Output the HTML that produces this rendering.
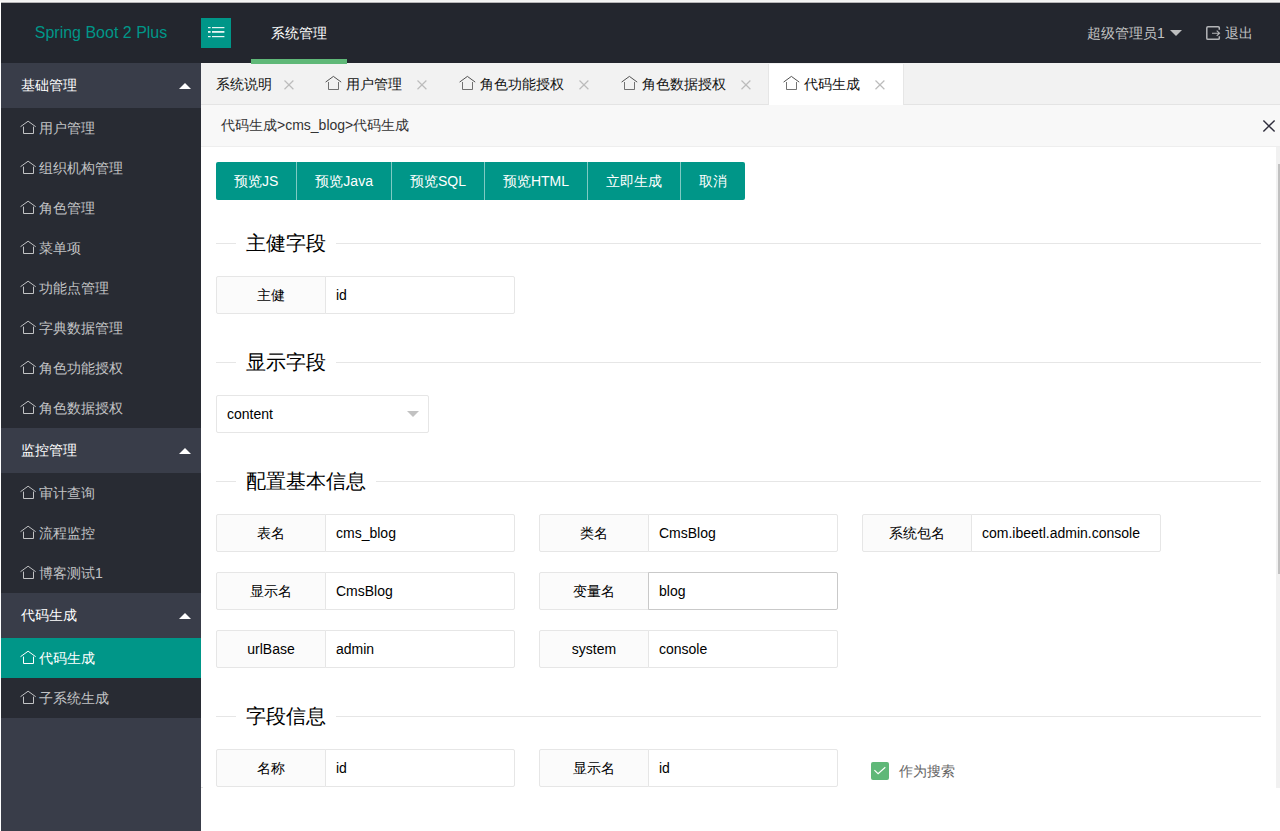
<!DOCTYPE html>
<html lang="zh">
<head>
<meta charset="utf-8">
<title>Spring Boot 2 Plus</title>
<style>
*{box-sizing:border-box;margin:0;padding:0}
html,body{width:1280px;height:831px;overflow:hidden;background:#fff}
body{font-family:"Liberation Sans",sans-serif;font-size:14px;color:#000;position:relative}
.abs{position:absolute}
#topstrip{left:0;top:0;width:1280px;height:3px;background:linear-gradient(#f1f1f1 0,#f1f1f1 1px,#f5f5f5 1px,#f5f5f5 2px,#b6b5b7 2px,#b6b5b7 3px)}
#header{left:1px;top:3px;width:1279px;height:60px;background:#23262e;z-index:5}
#logo{left:0;top:0;width:200px;height:60px;line-height:60px;text-align:center;color:#009688;font-size:16px}
#toggle{left:200px;top:15px;width:30px;height:30px;background:#009688}
#nav1{left:250px;top:0;width:96px;height:60px;line-height:60px;text-align:center;color:#fff;font-size:14px}
#nav1bar{left:250px;top:56px;width:96px;height:5px;background:#5fb878}
.hr{color:#c1c2c3;font-size:14px;line-height:60px;height:60px;top:0;white-space:nowrap}
#side{left:1px;top:63px;width:200px;height:768px;background:#393d49}
.grp{position:relative;height:45px;line-height:45px;padding-left:20px;color:#fff;font-size:14px}
.grp:after{content:"";position:absolute;right:10px;top:14px;border:6px solid transparent;border-bottom-color:#fff}
.sub{background:#282b33}
.it{position:relative;height:40px;line-height:40px;padding-left:38px;color:#c2c3c5;font-size:14px;white-space:nowrap}
.it svg{position:absolute;left:19px;top:12px}
.it.on{background:#009688;color:#fff}
#tabs{left:201px;top:63px;width:1079px;height:42px;background:#f2f2f2;border-bottom:1px solid #e4e4e4}
.tab{position:absolute;top:0;height:41px;line-height:41px;font-size:14px;color:#111;white-space:nowrap}
.tab svg.h{position:absolute;top:12px;color:#505050}
.tab .x{position:absolute;top:17px}
.tab span{top:1px}
.tab.on{background:#fff;border-left:1px solid #e6e6e6;border-right:1px solid #e6e6e6;top:1px;height:41px}
#tbar{left:201px;top:105px;width:1079px;height:42px;background:#f8f8f8;border-bottom:1px solid #eee;line-height:41px;padding-left:20px;color:#333;font-size:14px}
#content{left:201px;top:147px;width:1075px;height:684px;background:#fff}
#track{left:1276px;top:147px;width:4px;height:641px;background:#f1f1f1}
#thumb{left:1278px;top:164px;width:2px;height:410px;background:#c1c1c1}
.btns{left:15px;top:15px;height:38px;border-radius:2px;overflow:hidden;white-space:nowrap;font-size:0}
.btn{display:inline-block;height:38px;line-height:38px;padding:0 18px;background:#009688;color:#fff;font-size:14px;border-left:1px solid #7fcac3}
.btn:first-child{border-left:none}
.fs{left:15px;width:1045px;height:1px;background:#e6e6e6}
.lg{position:absolute;left:20px;top:-15px;height:30px;line-height:30px;padding:0 10px;background:#fff;font-size:20px;font-weight:300;color:#000;white-space:nowrap}
.fi{height:38px;width:299px}
.fi .l{position:absolute;left:0;top:0;width:110px;height:38px;line-height:36px;text-align:center;border:1px solid #e6e6e6;background:#fbfbfb;border-radius:2px 0 0 2px;color:#000;white-space:nowrap}
.fi .i{position:absolute;left:109px;top:0;width:190px;height:38px;line-height:36px;padding-left:10px;border:1px solid #e6e6e6;background:#fff;border-radius:0 2px 2px 0;color:#000;white-space:nowrap}
.fi .i.hv{border-color:#c9c9c9}
</style>
</head>
<body>
<div id="topstrip" class="abs"></div>
<div class="abs" style="left:0;top:2px;width:1px;height:829px;background:#fff"></div>
<div class="abs" style="left:201px;top:787px;width:2px;height:1px;background:#e4e4e4;z-index:6"></div>

<div id="header" class="abs">
  <div id="logo" class="abs">Spring Boot 2 Plus</div>
  <div id="toggle" class="abs">
    <svg width="30" height="30" viewBox="0 0 30 30" style="position:absolute;left:0;top:0">
      <g fill="#e8f5f3">
        <rect x="7" y="9" width="2.6" height="1.2"/><rect x="11" y="9" width="12.4" height="1.2"/>
        <rect x="7" y="13" width="2.6" height="1.8"/><rect x="11" y="13" width="12.4" height="1.8"/>
        <rect x="7" y="18" width="2.6" height="1.2"/><rect x="11" y="18" width="12.4" height="1.2"/>
      </g>
    </svg>
  </div>
  <div id="nav1" class="abs">系统管理</div>
  <div id="nav1bar" class="abs"></div>
  <div class="abs hr" style="left:1086px">超级管理员1</div>
  <div class="abs" style="left:1169px;top:27px;border:6px solid transparent;border-top-color:#bdbebf;width:0;height:0"></div>
  <svg class="abs" style="left:1204px;top:22px" width="17" height="17" viewBox="0 0 17 17">
    <path d="M14.3 4.7V2.9a1.1 1.1 0 0 0-1.1-1.1H2.9a1.1 1.1 0 0 0-1.1 1.1v10.3a1.1 1.1 0 0 0 1.1 1.1h10.3a1.1 1.1 0 0 0 1.1-1.1v-1.9" fill="none" stroke="#b4b5b8" stroke-width="1.5"/>
    <path d="M7 8.2h7.2M11.7 5.6l2.8 2.6-2.8 2.6" fill="none" stroke="#b4b5b8" stroke-width="1.15"/>
  </svg>
  <div class="abs hr" style="left:1224px">退出</div>
</div>

<div id="side" class="abs">
  <div class="grp">基础管理</div>
  <div class="sub">
    <div class="it"><svg width="17" height="15" viewBox="0 0 17 15"><use href="#hs"/></svg>用户管理</div>
    <div class="it"><svg width="17" height="15" viewBox="0 0 17 15"><use href="#hs"/></svg>组织机构管理</div>
    <div class="it"><svg width="17" height="15" viewBox="0 0 17 15"><use href="#hs"/></svg>角色管理</div>
    <div class="it"><svg width="17" height="15" viewBox="0 0 17 15"><use href="#hs"/></svg>菜单项</div>
    <div class="it"><svg width="17" height="15" viewBox="0 0 17 15"><use href="#hs"/></svg>功能点管理</div>
    <div class="it"><svg width="17" height="15" viewBox="0 0 17 15"><use href="#hs"/></svg>字典数据管理</div>
    <div class="it"><svg width="17" height="15" viewBox="0 0 17 15"><use href="#hs"/></svg>角色功能授权</div>
    <div class="it"><svg width="17" height="15" viewBox="0 0 17 15"><use href="#hs"/></svg>角色数据授权</div>
  </div>
  <div class="grp">监控管理</div>
  <div class="sub">
    <div class="it"><svg width="17" height="15" viewBox="0 0 17 15"><use href="#hs"/></svg>审计查询</div>
    <div class="it"><svg width="17" height="15" viewBox="0 0 17 15"><use href="#hs"/></svg>流程监控</div>
    <div class="it"><svg width="17" height="15" viewBox="0 0 17 15"><use href="#hs"/></svg>博客测试1</div>
  </div>
  <div class="grp">代码生成</div>
  <div class="sub">
    <div class="it on"><svg width="17" height="15" viewBox="0 0 17 15"><use href="#hs"/></svg>代码生成</div>
    <div class="it"><svg width="17" height="15" viewBox="0 0 17 15"><use href="#hs"/></svg>子系统生成</div>
  </div>
</div>

<svg width="0" height="0" style="position:absolute">
  <defs>
    <g id="hm" fill="none" stroke="currentColor" stroke-width="1">
      <path d="M0.6 7.1 L8.4 1.4 L16.2 7.1"/>
      <path d="M3.5 7 V14.5 H13.5 V7" opacity=".8"/>
    </g>
    <g id="hs" fill="none" stroke="currentColor" stroke-width="1">
      <path d="M0.5 6.7 L8.1 1.2 L15.7 6.7"/>
      <path d="M3.5 6.6 V13.5 H13.5 V6.6"/>
    </g>
    <g id="xx" fill="none" stroke="#bcbcbc" stroke-width="1.2">
      <path d="M0.5 0.5 L9.4 9.2 M9.4 0.5 L0.5 9.2"/>
    </g>
  </defs>
</svg>

<div id="tabs" class="abs">
  <div class="tab" style="left:0;width:110px"><span class="abs" style="left:15px">系统说明</span><svg class="x" style="left:83px" width="10" height="10"><use href="#xx"/></svg></div>
  <div class="tab" style="left:110px;width:134px"><svg class="h" style="left:14px" width="17" height="16" viewBox="0 0 17 16"><use href="#hm"/></svg><span class="abs" style="left:35px">用户管理</span><svg class="x" style="left:106px" width="10" height="10"><use href="#xx"/></svg></div>
  <div class="tab" style="left:244px;width:162px"><svg class="h" style="left:14px" width="17" height="16" viewBox="0 0 17 16"><use href="#hm"/></svg><span class="abs" style="left:35px">角色功能授权</span><svg class="x" style="left:134px" width="10" height="10"><use href="#xx"/></svg></div>
  <div class="tab" style="left:406px;width:162px"><svg class="h" style="left:14px" width="17" height="16" viewBox="0 0 17 16"><use href="#hm"/></svg><span class="abs" style="left:35px">角色数据授权</span><svg class="x" style="left:134px" width="10" height="10"><use href="#xx"/></svg></div>
  <div class="tab on" style="left:567px;width:136px"><svg class="h" style="left:14px;top:11px" width="17" height="16" viewBox="0 0 17 16"><use href="#hm"/></svg><span class="abs" style="left:35px;top:0">代码生成</span><svg class="x" style="left:106px;top:16px" width="10" height="10"><use href="#xx"/></svg></div>
</div>

<div id="tbar" class="abs">代码生成&gt;cms_blog&gt;代码生成
  <svg class="abs" style="left:1061px;top:14px" width="14" height="14" viewBox="0 0 14 14"><path d="M1.4 1.4L12.6 12.6M12.6 1.4L1.4 12.6" stroke="#2e2d3c" stroke-width="1.4" fill="none"/></svg>
</div>

<div id="content" class="abs">
  <div class="btns abs"><span class="btn">预览JS</span><span class="btn">预览Java</span><span class="btn">预览SQL</span><span class="btn">预览HTML</span><span class="btn">立即生成</span><span class="btn">取消</span></div>

  <div class="fs abs" style="top:96px"><div class="lg">主健字段</div></div>
  <div class="fi abs" style="left:15px;top:129px"><div class="l">主健</div><div class="i">id</div></div>

  <div class="fs abs" style="top:215px"><div class="lg">显示字段</div></div>
  <div class="abs" style="left:15px;top:248px;width:213px;height:38px;line-height:36px;border:1px solid #e6e6e6;border-radius:2px;padding-left:10px">content
    <div class="abs" style="right:9px;top:15px;width:0;height:0;border:6px solid transparent;border-top-color:#c2c2c2"></div>
  </div>

  <div class="fs abs" style="top:334px"><div class="lg">配置基本信息</div></div>
  <div class="fi abs" style="left:15px;top:367px"><div class="l">表名</div><div class="i">cms_blog</div></div>
  <div class="fi abs" style="left:338px;top:367px"><div class="l">类名</div><div class="i">CmsBlog</div></div>
  <div class="fi abs" style="left:661px;top:367px"><div class="l">系统包名</div><div class="i">com.ibeetl.admin.console</div></div>
  <div class="fi abs" style="left:15px;top:425px"><div class="l">显示名</div><div class="i">CmsBlog</div></div>
  <div class="fi abs" style="left:338px;top:425px"><div class="l">变量名</div><div class="i hv">blog</div></div>
  <div class="fi abs" style="left:15px;top:483px"><div class="l">urlBase</div><div class="i">admin</div></div>
  <div class="fi abs" style="left:338px;top:483px"><div class="l">system</div><div class="i">console</div></div>

  <div class="fs abs" style="top:569px"><div class="lg">字段信息</div></div>
  <div class="fi abs" style="left:15px;top:602px"><div class="l">名称</div><div class="i">id</div></div>
  <div class="fi abs" style="left:338px;top:602px"><div class="l">显示名</div><div class="i">id</div></div>
  <div class="abs" style="left:670px;top:615px;width:18px;height:18px;background:#5fb878;border-radius:2px">
    <svg width="18" height="18" viewBox="0 0 18 18" style="position:absolute;left:0;top:0"><path d="M3.4 8.1L7.1 11.6L14.3 5.2" fill="none" stroke="#fff" stroke-width="1.15"/></svg>
  </div>
  <div class="abs" style="left:698px;top:615px;height:18px;line-height:18px;color:#666;white-space:nowrap">作为搜索</div>
</div>
<div id="track" class="abs"></div>
<div id="thumb" class="abs"></div>
</body>
</html>
